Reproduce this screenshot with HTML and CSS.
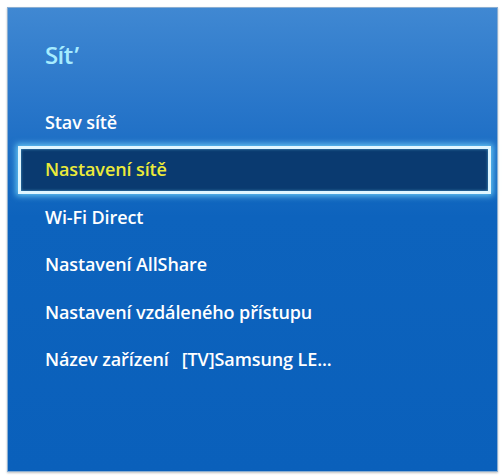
FILE: index.html
```html
<!DOCTYPE html>
<html lang="cs">
<head>
    <meta charset="UTF-8">
    <meta name="viewport" content="width=device-width, initial-scale=1.0">
    <title>Síť</title>
    <link rel="stylesheet" href="styles.css">
</head>
<body>
    <div class="panel">
        <div class="title">Sít<span class="apos">’</span></div>
        <div class="menu">
            <div class="item">Stav sítě</div>
            <div class="item selected">Nastavení sítě</div>
            <div class="item">Wi-Fi Direct</div>
            <div class="item">Nastavení AllShare</div>
            <div class="item">Nastavení vzdáleného přístupu</div>
            <div class="item">Název zařízení<span class="value">[TV]Samsung LE...</span></div>
        </div>
    </div>
</body>
</html>
```

FILE: styles.css
```css
body {
    margin: 0;
    background: #ffffff;
    font-family: "Open Sans", Arial, sans-serif;
}

.panel {
    margin: 7px;
    width: 491px;
    height: 465px;
    box-sizing: border-box;
    border: 1px solid #8aaed2;
    background: linear-gradient(to bottom, #4088d2 0, #2775c9 22%, #0d63bd 45%, #0a60bb 100%);
    box-shadow: 0 1px 2px rgba(0, 0, 0, 0.25);
}

.title {
    height: 91px;
    line-height: 93px;
    padding-left: 37px;
    font-size: 24px;
    font-weight: 600;
    color: #a6ecff;
    letter-spacing: -0.6px;
}

.apos {
    margin-left: 2px;
}

.menu {
    margin: 0 6px 0 10px;
}

.item {
    height: 47.4px;
    line-height: 47px;
    padding-left: 27px;
    font-size: 18px;
    font-weight: 600;
    color: #ffffff;
    letter-spacing: -0.1px;
    box-sizing: border-box;
}

.value {
    margin-left: 13px;
}

.item.selected {
    border: 3px solid #dff6ff;
    padding-left: 24px;
    line-height: 41px;
    background: #0a3a70;
    color: #ecea3a;
    box-shadow: 0 0 6px 2px rgba(120, 220, 255, 0.8), inset 0 0 3px rgba(120, 220, 255, 0.6);
}
```
